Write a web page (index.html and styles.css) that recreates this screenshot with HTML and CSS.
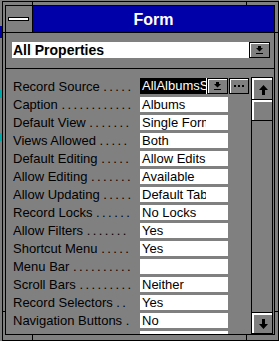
FILE: index.html
```html
<!DOCTYPE html>
<html lang="en">
<head>
    <meta charset="UTF-8">
    <meta name="viewport" content="width=device-width, initial-scale=1.0">
    <title>Form Properties</title>
    <link rel="stylesheet" href="styles.css">
</head>
<body>

<div class="window">
  <div class="inner">

    <div class="titlebar">
      <div class="sysmenu"><span class="sysbar"></span></div>
      <div class="caption">Form</div>
    </div>

    <div class="combo">
      <div class="combo-text">All Properties</div>
      <div class="btn combo-btn">
        <svg width="7" height="8" viewBox="0 0 7 8"><path d="M2 0h3v2h2L3.5 5.5 0 2h2z"/><rect y="7" width="7" height="1"/></svg>
      </div>
    </div>

    <div class="list">
      <div class="rows">
        <div class="row">
          <span class="label">Record Source <span class="dots">.....</span></span>
          <span class="value active"><span class="txt sel">AllAlbumsSorted</span><span class="btn drop"><svg width="7" height="8" viewBox="0 0 7 8"><path d="M2 0h3v2h2L3.5 5.5 0 2h2z"/><rect y="7" width="7" height="1"/></svg></span></span>
          <span class="btn more"><svg width="10" height="2" viewBox="0 0 10 2"><rect width="2" height="2"/><rect x="4" width="2" height="2"/><rect x="8" width="2" height="2"/></svg></span>
        </div>
        <div class="row">
          <span class="label">Caption <span class="dots">............</span></span>
          <span class="value"><span class="txt">Albums</span></span>
        </div>
        <div class="row">
          <span class="label">Default View <span class="dots">.......</span></span>
          <span class="value"><span class="txt">Single Form</span></span>
        </div>
        <div class="row">
          <span class="label">Views Allowed <span class="dots">.....</span></span>
          <span class="value"><span class="txt">Both</span></span>
        </div>
        <div class="row">
          <span class="label">Default Editing <span class="dots">.....</span></span>
          <span class="value"><span class="txt">Allow Edits</span></span>
        </div>
        <div class="row">
          <span class="label">Allow Editing <span class="dots">.......</span></span>
          <span class="value"><span class="txt">Available</span></span>
        </div>
        <div class="row">
          <span class="label">Allow Updating <span class="dots">.....</span></span>
          <span class="value"><span class="txt">Default Tables</span></span>
        </div>
        <div class="row">
          <span class="label">Record Locks <span class="dots">......</span></span>
          <span class="value"><span class="txt">No Locks</span></span>
        </div>
        <div class="row">
          <span class="label">Allow Filters <span class="dots">.......</span></span>
          <span class="value"><span class="txt">Yes</span></span>
        </div>
        <div class="row">
          <span class="label">Shortcut Menu <span class="dots">.....</span></span>
          <span class="value"><span class="txt">Yes</span></span>
        </div>
        <div class="row">
          <span class="label">Menu Bar <span class="dots">..........</span></span>
          <span class="value"></span>
        </div>
        <div class="row">
          <span class="label">Scroll Bars <span class="dots">.........</span></span>
          <span class="value"><span class="txt">Neither</span></span>
        </div>
        <div class="row">
          <span class="label">Record Selectors <span class="dots">..</span></span>
          <span class="value"><span class="txt">Yes</span></span>
        </div>
        <div class="row">
          <span class="label">Navigation Buttons <span class="dots">.</span></span>
          <span class="value"><span class="txt">No</span></span>
        </div>
        <div class="row">
          <span class="label">Auto Resize <span class="dots">.......</span></span>
          <span class="value"><span class="txt">Yes</span></span>
        </div>
      </div>

      <!-- vertical scroll bar -->
      <div class="scrollbar">
        <div class="sb-btn sb-up">
          <svg width="9" height="10" viewBox="0 0 9 10"><path d="M4.5 0 9 5H6v5H3V5H0z"/></svg>
        </div>
        <div class="sb-thumb"></div>
        <div class="sb-track"></div>
        <div class="sb-btn sb-down">
          <svg width="9" height="10" viewBox="0 0 9 10"><path d="M3 0h3v5h3l-4.5 5L0 5h3z"/></svg>
        </div>
      </div>
    </div>

  </div>
</div>

</body>
</html>
```

FILE: styles.css
```css
body {
    margin: 0;
    padding: 1px 0 0 2px;
    font-family: "Liberation Sans", Arial, sans-serif;
    color: #000;
    background:
        linear-gradient(#0000a8, #0000a8) 0 26px / 2px 12px no-repeat,
        linear-gradient(#00a8a8, #00a8a8) 0 90px / 2px 8px no-repeat,
        linear-gradient(#00a8a8, #00a8a8) 0 133px / 2px 8px no-repeat,
        #808080;
}
svg {
    display: block;
    fill: #000;
}

/* Window frame with corner notches */
.window {
    width: 277px;
    height: 340px;
    box-sizing: border-box;
    border: 1px solid #000;
    padding: 3px 3px 5px 2px;
    background:
        linear-gradient(#000, #000) 29px 0 / 1px 100% no-repeat,
        linear-gradient(#000, #000) 243px 0 / 1px 100% no-repeat,
        linear-gradient(#000, #000) 0 30px / 100% 1px no-repeat,
        linear-gradient(#000, #000) 0 309px / 100% 1px no-repeat,
        #808080;
}
.inner {
    height: 100%;
    box-sizing: border-box;
    border: 1px solid #000;
    background-color: #808080;
}

/* Title bar */
.titlebar {
    display: flex;
    height: 27px;
    box-sizing: border-box;
    border-bottom: 1px solid #000;
}
.sysmenu {
    width: 27px;
    box-sizing: border-box;
    border-right: 1px solid #000;
    padding: 11px 0 0 2px;
}
.sysbar {
    display: block;
    width: 21px;
    height: 4px;
    box-sizing: border-box;
    border: 1px solid #000;
    background-color: #fff;
}
.caption {
    flex: 1;
    background-color: #0000a8;
    color: #fff;
    font-size: 16px;
    font-weight: bold;
    line-height: 25px;
    padding-top: 1px;
    text-align: center;
}

/* Buttons */
.btn {
    box-sizing: border-box;
    border: 1px solid #000;
    background-color: #808080;
    box-shadow: inset 1px 1px #fff;
    display: flex;
    align-items: center;
    justify-content: center;
}

/* Combo box */
.combo {
    display: flex;
    height: 16px;
    margin: 9px 4px 10px 6px;
}
.combo-text {
    flex: 1;
    background-color: #fff;
    font-size: 14px;
    font-weight: bold;
    line-height: 16px;
    padding-left: 1px;
    white-space: nowrap;
}
.combo-btn {
    width: 21px;
}

/* Property list */
.list {
    display: flex;
    height: 266px;
    box-sizing: border-box;
    border-top: 1px solid #000;
}
.rows {
    width: 245px;
    box-sizing: border-box;
    padding: 10px 0 0 7px;
    overflow: hidden;
    font-size: 13px;
}
.row {
    display: flex;
    height: 18px;
    line-height: 15px;
}
.label {
    width: 121px;
    margin-right: 6px;
    white-space: nowrap;
    overflow: hidden;
}
.dots {
    letter-spacing: 2.4px;
}
.value {
    display: flex;
    width: 88px;
    height: 15px;
    background-color: #fff;
}
.txt {
    width: 64px;
    padding-left: 2px;
    white-space: nowrap;
    overflow: hidden;
}
.value.active {
    height: 16px;
    margin-top: -1px;
}
.sel {
    background-color: #000;
    color: #fff;
    line-height: 16px;
}
.drop {
    width: 21px;
    height: 16px;
    margin-left: 1px;
}
.more {
    width: 20px;
    height: 16px;
    margin: -1px 0 0 1px;
}

/* Scroll bar */
.scrollbar {
    display: flex;
    flex-direction: column;
    width: 22px;
    height: 257px;
    margin-top: 8px;
    box-sizing: border-box;
    border: 1px solid #000;
}
.sb-btn,
.sb-thumb {
    box-sizing: border-box;
    box-shadow: inset 2px 2px #fff;
}
.sb-btn {
    display: flex;
    align-items: center;
    justify-content: center;
    padding: 2px 0 0 2px;
}
.sb-up {
    height: 22px;
    border-bottom: 1px solid #000;
}
.sb-thumb {
    height: 21px;
    border-bottom: 1px solid #000;
}
.sb-track {
    flex: 1;
}
.sb-down {
    height: 21px;
    border-top: 1px solid #000;
}
```
